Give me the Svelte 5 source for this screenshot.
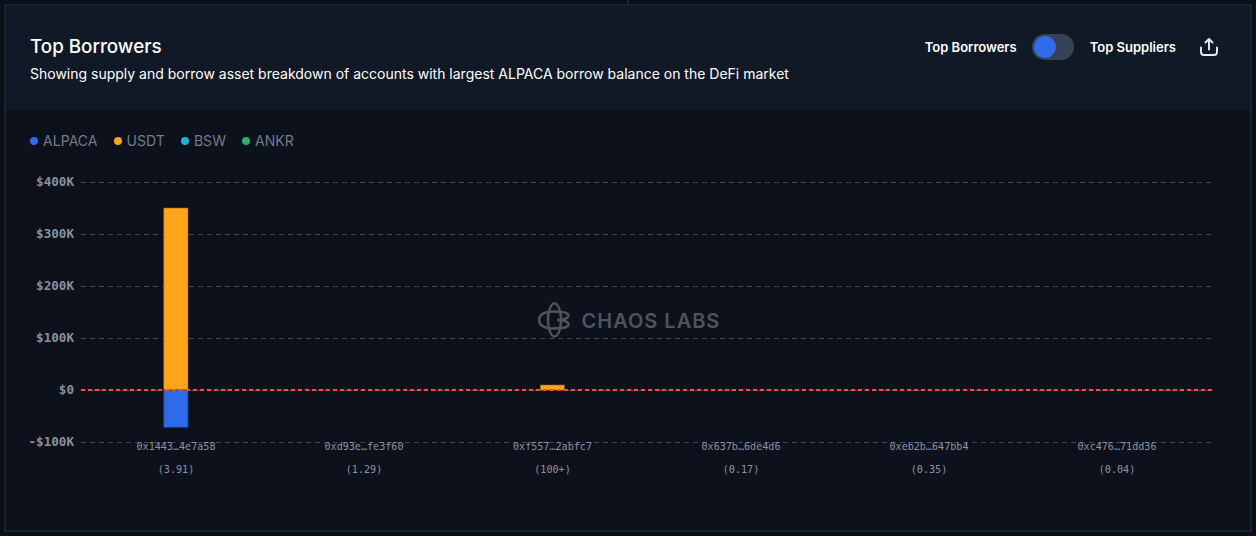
<script lang="ts">
	const legend = [
		{ name: 'ALPACA', color: '#2f6bea' },
		{ name: 'USDT', color: '#ffa51a' },
		{ name: 'BSW', color: '#1fb0d6' },
		{ name: 'ANKR', color: '#26b36b' }
	];

	const ticks = [
		{ label: '$400K', y: 182 },
		{ label: '$300K', y: 234 },
		{ label: '$200K', y: 286 },
		{ label: '$100K', y: 338 },
		{ label: '-$100K', y: 442 }
	];

	const accounts = [
		{ address: '0x1443…4e7a58', ratio: '(3.91)', x: 176 },
		{ address: '0xd93e…fe3f60', ratio: '(1.29)', x: 364 },
		{ address: '0xf557…2abfc7', ratio: '(100+)', x: 552.5 },
		{ address: '0x637b…6de4d6', ratio: '(0.17)', x: 741 },
		{ address: '0xeb2b…647bb4', ratio: '(0.35)', x: 929 },
		{ address: '0xc476…71dd36', ratio: '(0.04)', x: 1117 }
	];
</script>

<div class="page">
	<div class="top-divider"></div>
	<section class="card">
		<header class="card-header">
			<div class="titles">
				<h2>Top Borrowers</h2>
				<p>Showing supply and borrow asset breakdown of accounts with largest ALPACA borrow balance on the DeFi market</p>
			</div>
			<div class="controls">
				<span>Top Borrowers</span>
				<div class="toggle"><div class="knob"></div></div>
				<span>Top Suppliers</span>
				<svg class="export" width="24" height="24" viewBox="0 0 24 24" fill="none" stroke="#e8ebf0" stroke-width="1.9" stroke-linecap="round" stroke-linejoin="round">
					<path d="M4 12.5V17a3 3 0 0 0 3 3h10a3 3 0 0 0 3-3v-4.5" />
					<path d="M12 14.5V4M8.5 7.5 12 4l3.5 3.5" />
				</svg>
			</div>
		</header>
		<div class="card-body">
			<ul class="legend">
				{#each legend as item}
					<li><i style="background: {item.color}"></i>{item.name}</li>
				{/each}
			</ul>
			<!-- chart canvas uses page coordinates, so the viewBox starts at the body origin -->
			<svg class="chart" width="1244" height="420" viewBox="6 110 1244 420">
				{#each ticks as tick}
					<line x1="81" x2="1211" y1={tick.y + 0.5} y2={tick.y + 0.5} class="grid" />
					<text x="74" y={tick.y + 4} class="tick">{tick.label}</text>
				{/each}
				<line x1="81" x2="1211" y1="390.5" y2="390.5" class="grid" />
				<text x="74" y="394" class="tick">$0</text>

				<rect x="163.8" y="208" width="24.2" height="182" fill="#ffa51a" stroke="#8f5f17" stroke-width="0.6" />
				<rect x="163.8" y="390" width="24.2" height="37.3" fill="#2f6bea" stroke="#1c3f8a" stroke-width="0.8" />
				<rect x="540.3" y="385" width="24" height="5" fill="#ffa51a" stroke="#8f5f17" stroke-width="0.6" />

				<line x1="81" x2="1213" y1="390" y2="390" class="zero" />

				{#each accounts as account}
					<text x={account.x} y="449.5" class="addr">{account.address}</text>
					<text x={account.x} y="473" class="addr">{account.ratio}</text>
				{/each}

				<g fill="none" stroke="#4f535e" stroke-width="2.4">
					<ellipse cx="554.5" cy="320" rx="6.5" ry="16.5" />
					<path d="M557 320C564 320 569 318 568.500 315C568 312 560 311.500 553 311.500C544 311.500 539 315 539 320C539 325 544 328.500 553 328.500C560 328.500 568 328 568.500 325C569 322 564 320 557 320" />
				</g>
				<text x="581.5" y="328" class="logo-text">CHAOS LABS</text>
			</svg>
		</div>
	</section>
</div>

<style>
	:global(body) {
		margin: 0;
		background: #0b0f1a;
	}

	.page {
		position: relative;
		height: 536px;
		overflow: hidden;
		padding: 4px;
		box-sizing: border-box;
		font-family: Inter, 'Liberation Sans', sans-serif;
	}

	.top-divider {
		position: absolute;
		left: 627px;
		top: 0;
		width: 2px;
		height: 4px;
		background: #1a2230;
	}

	.card {
		height: 528px;
		box-sizing: border-box;
		display: flex;
		flex-direction: column;
		background: #0d111c;
		border: 2px solid #1a2230;
	}

	.card-header {
		height: 104px;
		padding: 0 29px 0 24px;
		flex-shrink: 0;
		background: #111927;
		display: flex;
		justify-content: space-between;
		align-items: flex-start;
	}

	.titles {
		padding-top: 29px;
	}

	h2 {
		margin: 0;
		font-size: 18.8px;
		font-weight: 500;
		line-height: 24px;
		color: #fff;
	}

	p {
		margin: 5px 0 0;
		font-size: 14px;
		line-height: 20px;
		color: #fff;
	}

	.controls {
		display: flex;
		align-items: center;
		margin-top: 28px;
		font-size: 13px;
		font-weight: 600;
		color: #fff;
	}

	.toggle {
		width: 42px;
		height: 26px;
		margin: 0 16px 0 15px;
		border-radius: 13px;
		background: #374355;
		position: relative;
	}

	.knob {
		position: absolute;
		left: 2px;
		top: 2px;
		width: 22px;
		height: 22px;
		border-radius: 50%;
		background: #2f6bea;
	}

	.export {
		margin-left: 21px;
	}

	.card-body {
		position: relative;
		flex: 1;
		min-height: 0;
	}

	.legend {
		list-style: none;
		margin: 0;
		padding: 21px 24px 0;
		display: flex;
		gap: 16px;
		height: 20px;
		font-size: 14px;
		line-height: 18px;
		letter-spacing: 0.05px;
		color: #757b87;
	}

	.legend li {
		display: flex;
		align-items: center;
		gap: 5px;
	}

	.legend i {
		width: 8px;
		height: 8px;
		border-radius: 50%;
	}

	.chart {
		position: absolute;
		left: 0;
		top: 0;
		width: 100%;
		height: 100%;
	}

	.grid {
		stroke: #40454f;
		stroke-width: 1;
		stroke-dasharray: 5 4;
	}

	.zero {
		stroke: #ff4a3d;
		stroke-width: 2;
		stroke-dasharray: 4 3;
	}

	.tick {
		font-family: 'DejaVu Sans Mono', 'Liberation Mono', monospace;
		font-size: 12.6px;
		font-weight: 700;
		fill: #8a909c;
		text-anchor: end;
	}

	.addr {
		font-family: 'DejaVu Sans Mono', 'Liberation Mono', monospace;
		font-size: 10.1px;
		fill: #8b94a3;
		text-anchor: middle;
	}

	.logo-text {
		font-family: Inter, 'Liberation Sans', sans-serif;
		font-size: 20px;
		font-weight: 600;
		letter-spacing: 1px;
		fill: #4f535e;
	}
</style>
